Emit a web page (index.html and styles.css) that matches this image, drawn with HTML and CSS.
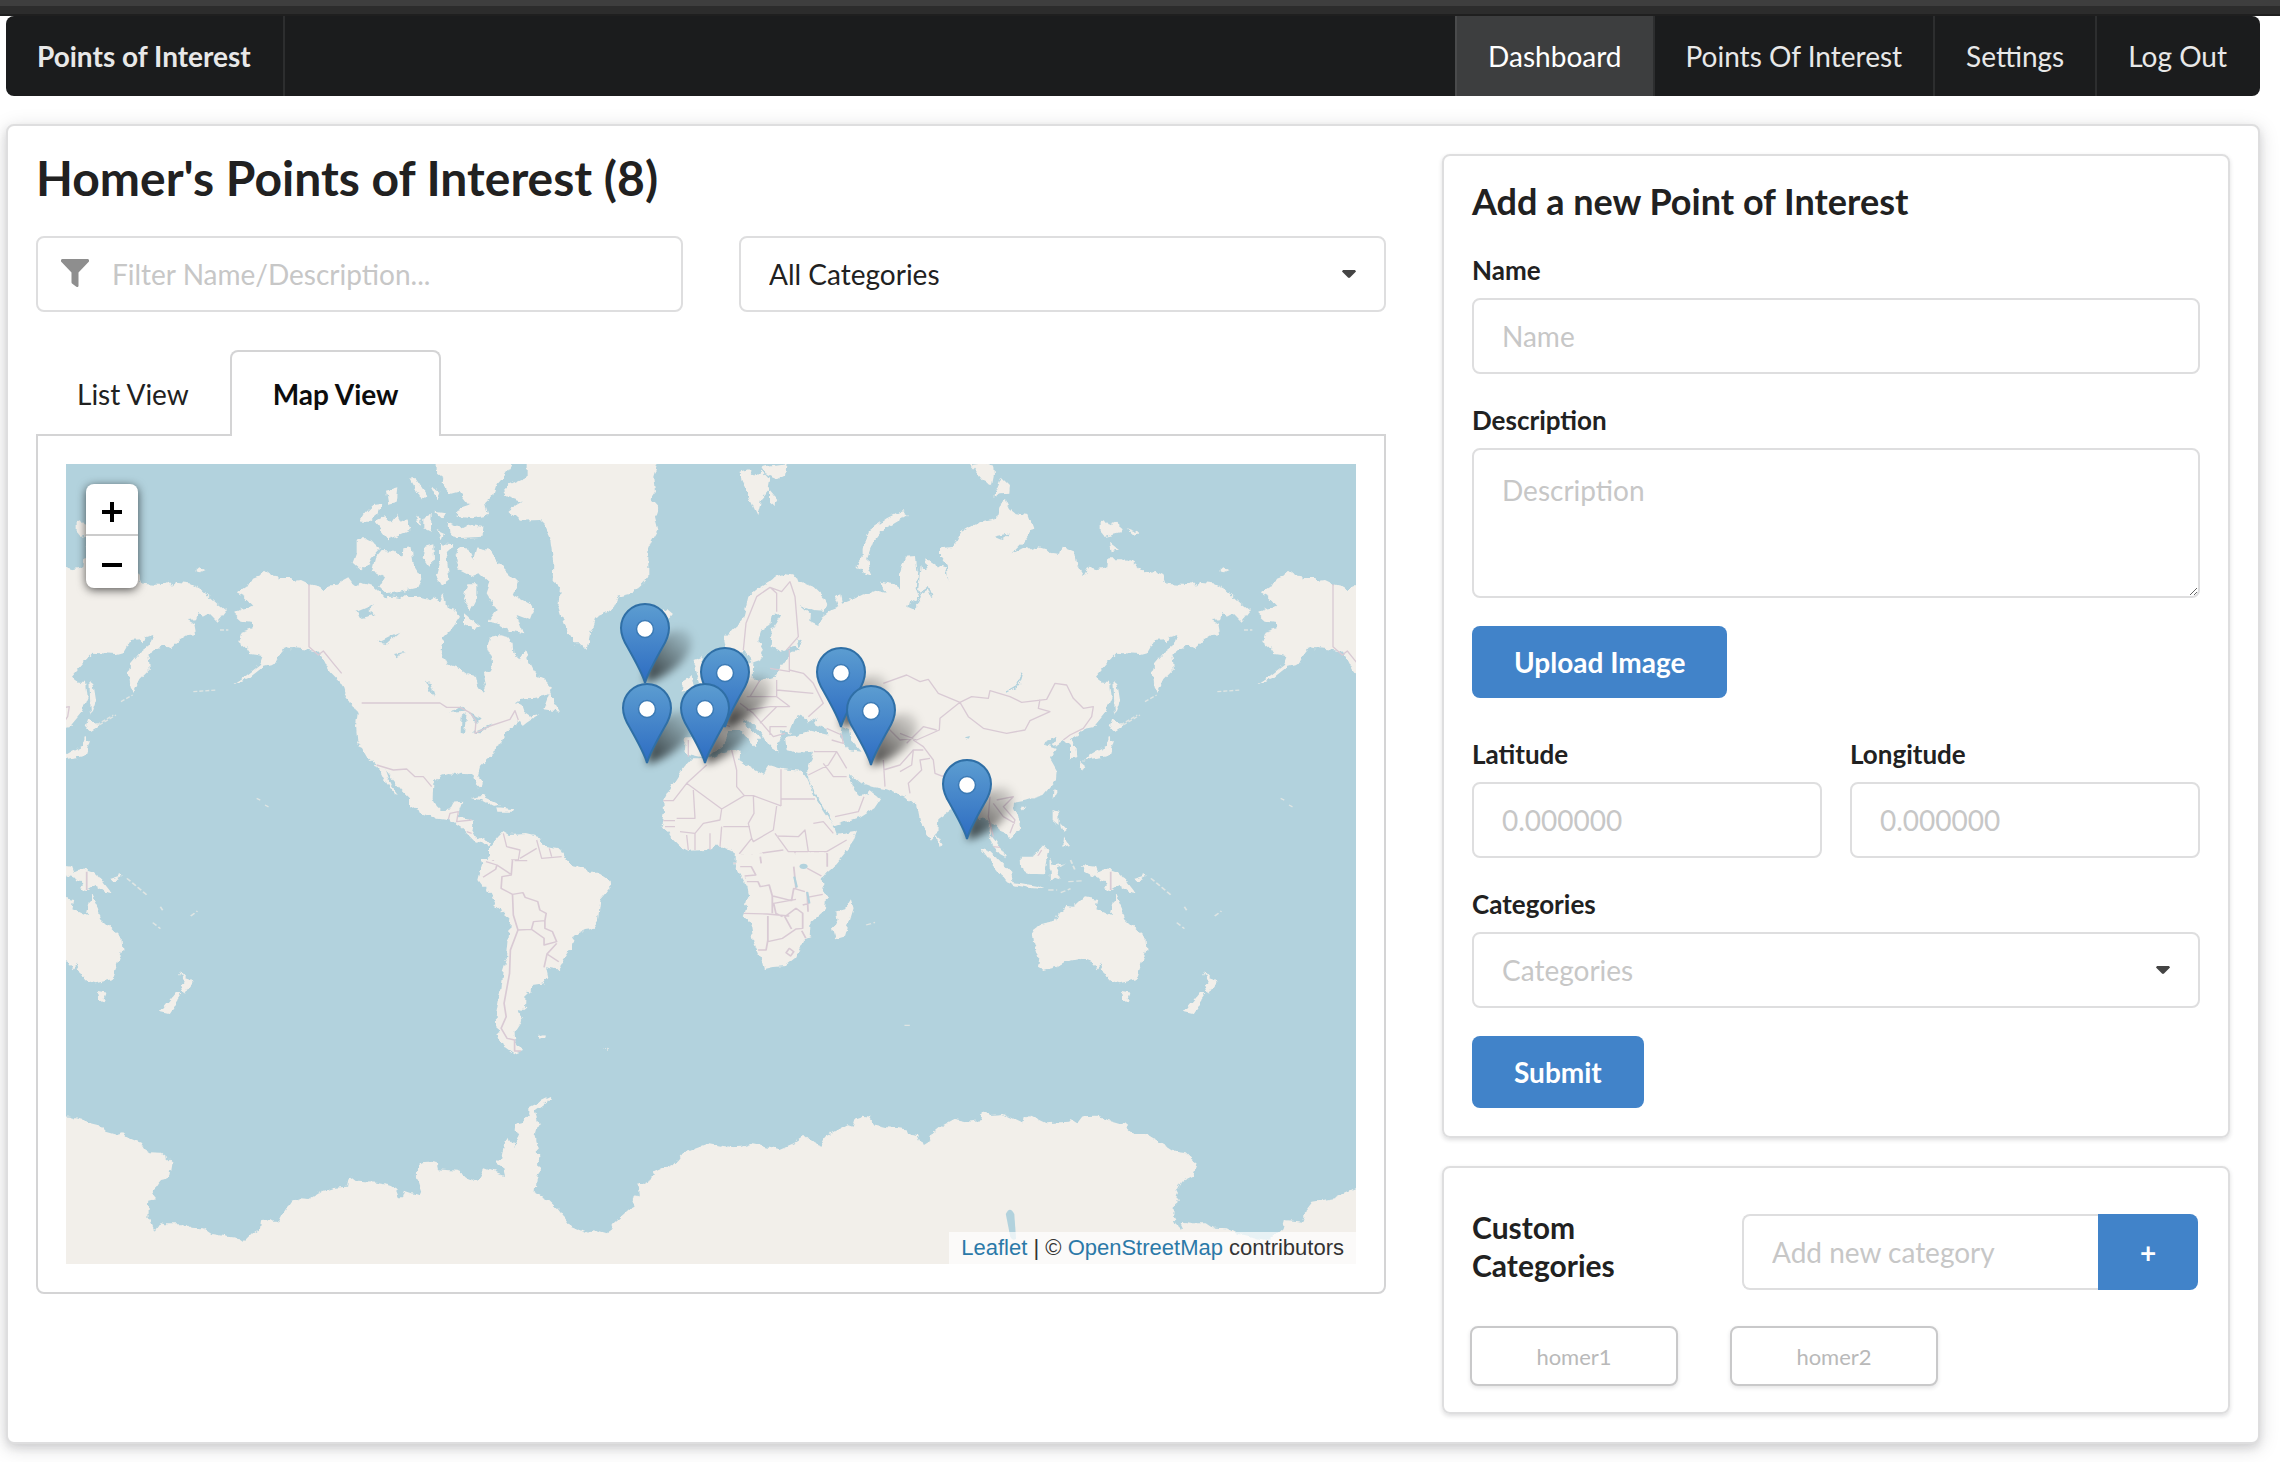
FILE: index.html
```html
<!DOCTYPE html>
<html lang="en">
<head>
<meta charset="utf-8">
<title>Points of Interest</title>
<link rel="stylesheet" href="styles.css">
</head>
<body>
<div class="window-edge"></div>
<div class="page">
  <nav class="menu">
    <a class="menu-item brand" href="#">Points of Interest</a>
    <div class="menu-right">
      <a class="menu-item active" href="#">Dashboard</a>
      <a class="menu-item" href="#">Points Of Interest</a>
      <a class="menu-item" href="#">Settings</a>
      <a class="menu-item" href="#">Log Out</a>
    </div>
  </nav>

  <main class="segment">
    <section class="main-column">
      <h1 class="title">Homer's Points of Interest (8)</h1>
      <div class="filters">
        <div class="icon-input">
          <svg class="filter-icon" viewBox="0 0 28 28" aria-hidden="true"><path d="M1 0H27Q29 1 27.500 3L17.500 13.500V27Q17 29 15 27.500L11 24.500Q10.500 24 10.500 23V13.500L.5 3Q-1 1 1 0Z"/></svg>
          <input class="field-control with-icon" type="text" placeholder="Filter Name/Description..." aria-label="Filter by name or description">
        </div>
        <div class="select-wrap">
          <select class="field-control" aria-label="Category filter"><option>All Categories</option></select>
          <svg class="caret" viewBox="0 0 14 8" aria-hidden="true"><path d="M1 0H13L14 1.500 8 7.500Q7 8.400 6 7.500L0 1.500Z"/></svg>
        </div>
      </div>

      <div class="tabs" role="tablist">
        <button class="tab" type="button" role="tab">List View</button>
        <button class="tab active" type="button" role="tab" aria-selected="true">Map View</button>
      </div>
      <div class="tab-panel">
        <div class="map">
          <svg class="map-tiles" viewBox="66 464 1290 800" preserveAspectRatio="xMidYMid slice" aria-hidden="true">
            <defs>
              <linearGradient id="pin-fill" x1="0" y1="0" x2="0" y2="1">
                <stop offset="0" stop-color="#5c9dd1"/><stop offset="1" stop-color="#2d6cc2"/>
              </linearGradient>
              <linearGradient id="shadow-fill" gradientUnits="userSpaceOnUse" x1="0" y1="0" x2="44" y2="-50">
                <stop offset="0" stop-opacity=".75"/><stop offset="1" stop-opacity=".08"/>
              </linearGradient>
              <filter id="soft" x="-50%" y="-50%" width="200%" height="200%"><feGaussianBlur stdDeviation="4"/></filter>
              <!-- Breaks up the straight runs of the coastlines -->
              <filter id="coast" x="-2%" y="-2%" width="104%" height="104%" color-interpolation-filters="sRGB">
                <feTurbulence type="fractalNoise" baseFrequency=".05" numOctaves="2" seed="4" result="noise"/>
                <feDisplacementMap in="SourceGraphic" in2="noise" scale="18" xChannelSelector="R" yChannelSelector="G"/>
                <feGaussianBlur stdDeviation="1.500"/>
              </filter>
              <g id="pin">
                <path d="M0 -1C-2 -9 -8 -20 -17 -36Q-24 -47 -24 -56A24 24 0 0 1 24 -56Q24 -47 17 -36C8 -20 2 -9 0 -1Z" fill="url(#pin-fill)" stroke="#2f6fa6" stroke-width="2"/>
                <circle cx="0" cy="-55" r="8.500" fill="#fff" stroke="#3b7ab5" stroke-width="1.500"/>
              </g>
              <path id="pin-shadow" d="M0 0L4 -34Q26 -58 42 -52Q54 -40 36 -20Q20 -5 0 0Z" filter="url(#soft)" fill="url(#shadow-fill)"/>
              <g id="world">
                <g transform="translate(60 450) scale(.33333)">
                  <g class="land coast">
                    <!-- North America -->
                    <path d="M615 362L628 372 650 376 662 384 690 384 705 392 720 390 747 403 770 408 790 420 810 406 830 404 845 394 862 385 872 398 885 408 900 398 925 404 945 412 960 425 975 442 1000 440 1020 444 1035 432 1050 442 1080 440 1110 448 1120 442 1140 452 1150 430 1160 470 1180 476 1200 500 1180 530 1150 560 1142 600 1160 640 1200 655 1225 672 1245 678 1250 700 1268 728 1278 705 1272 672 1290 664 1296 640 1292 616 1282 590 1290 560 1320 556 1345 562 1358 580 1360 612 1378 628 1395 600 1405 630 1420 660 1432 678 1450 685 1472 708 1470 728 1450 738 1420 744 1390 745 1368 760 1385 768 1392 788 1410 800 1435 795 1400 818 1388 828 1380 812 1350 835 1330 860 1322 880 1305 890 1303 912 1280 930 1260 950 1254 972 1265 1000 1262 1018 1250 1005 1243 980 1230 970 1200 968 1185 975 1165 972 1140 980 1120 1000 1118 1045 1130 1068 1145 1082 1170 1078 1180 1058 1207 1055 1198 1080 1195 1100 1212 1106 1238 1110 1235 1140 1250 1168 1275 1161 1290 1178 1284 1190 1265 1175 1248 1178 1225 1155 1200 1130 1165 1108 1120 1102 1090 1092 1060 1075 1050 1068 1050 1045 1025 1020 1000 990 975 958 990 1000 1015 1035 1005 1032 980 1000 965 970 950 945 920 920 905 895 892 870 888 830 893 790 880 768 858 740 850 715 835 690 815 670 800 650 785 620 770 605 735 598 700 595 675 592 660 610 650 640 632 645 610 650 570 682 515 706 560 676 600 645 610 618 570 612 560 596 535 575 545 545 578 535 575 515 545 512 520 490 548 476 580 470 550 440 530 430 560 410 575 385 600 375Z"/>
                    <!-- Arctic islands -->
                    <path d="M890 268L922 268 945 280 962 295 935 325 925 345 905 362 878 338 890 305ZM965 300L1005 302 1028 322 1030 295 1055 292 1060 340 1088 385 1075 412 1040 420 985 432 960 412 975 385 950 368 935 365 945 325ZM1095 290L1120 283 1122 325 1105 350 1085 320ZM1140 280L1180 283 1160 320 1168 388 1145 405 1128 375 1140 330ZM1185 320L1195 292 1225 296 1240 330 1250 292 1290 300 1325 350 1375 400 1360 435 1425 470 1410 510 1370 495 1390 550 1345 540 1310 520 1285 515 1310 480 1280 430 1290 400 1260 372 1240 380 1195 358ZM1222 400L1252 400 1252 440 1232 480 1212 450ZM1212 490L1262 532 1240 538 1212 525ZM900 215L915 190 940 165 965 162 955 190 925 215ZM945 215L975 200 995 220 1012 195 1022 215 1042 205 1050 240 985 268 968 245ZM1050 85L1068 85 1105 140 1082 145ZM978 122L1015 112 1010 155 985 162ZM1065 200L1082 205 1080 225ZM1090 200L1115 195 1112 245 1090 235ZM1112 110L1138 125 1130 145ZM1130 240L1152 250 1145 268ZM1125 185L1155 190 1145 205ZM1165 215L1205 235 1230 222 1270 228 1268 260 1185 265 1168 245ZM1130 30H1362L1325 88 1310 105 1300 135 1275 160 1285 195 1240 205 1190 200 1192 180 1228 168 1195 125 1170 132 1148 105 1150 80 1130 65ZM1290 430l18 6-8 20-14-10Z"/>
                    <!-- Greenland, Iceland, Svalbard -->
                    <path d="M1400 30L1795 30 1780 80 1785 125 1772 145 1795 170 1785 200 1795 240 1775 275 1765 300 1765 380 1750 400 1735 415 1710 432 1675 440 1662 470 1645 485 1610 500 1600 530 1590 550 1580 600 1562 580 1545 580 1525 545 1510 520 1495 470 1500 410 1478 390 1480 340 1470 260 1455 225 1440 210 1380 212 1345 180 1385 155 1340 140 1330 125 1350 103 1400 80ZM1812 475L1836 495 1822 515 1800 500ZM2042 65L2065 58 2085 80 2105 62 2130 90 2125 120 2105 145 2092 195 2078 165 2060 125 2045 95ZM2105 50L2180 40 2175 75 2150 88 2120 75ZM2130 120L2155 150 2145 168 2130 155ZM1470 725L1485 760 1500 785 1450 778Z"/>
                    <!-- Eurasia -->
                    <path d="M2065 440L2100 410 2130 392 2150 378 2170 372 2210 378 2215 392 2260 410 2290 440 2302 462 2292 482 2262 480 2222 465 2250 490 2248 512 2275 525 2285 500 2310 482 2338 472 2325 440 2340 430 2346 458 2380 445 2410 430 2430 432 2455 422 2480 428 2460 395 2500 402 2530 425 2550 440 2542 470 2560 478 2578 460 2520 440 2520 370 2535 320 2568 318 2572 370 2580 345 2600 360 2595 325 2625 345 2655 355 2665 395 2660 345 2640 320 2640 295 2680 290 2700 250 2740 225 2770 212 2810 205 2820 165 2838 153 2850 178 2865 190 2905 195 2920 235 2890 275 2855 312 2900 288 2915 300 2940 292 2960 298 2975 312 3000 315 3008 290 3045 305 3052 345 3070 375 3085 350 3110 358 3142 352 3145 325 3190 325 3215 335 3235 350 3250 370 3290 366 3310 375 3320 402 3380 405 3398 395 3412 412 3420 395 3460 400 3490 415 3520 440 3548 465 3570 482 3545 515 3520 490 3500 500 3490 482 3480 508 3455 510 3475 522 3480 550 3460 552 3430 570 3405 595 3385 585 3350 600 3338 622 3342 658 3310 690 3290 732 3282 700 3278 665 3285 640 3310 610 3340 588 3352 555 3330 562 3320 580 3308 568 3285 570 3265 605 3240 612 3170 608 3140 640 3105 680 3125 695 3150 695 3155 740 3135 790 3100 832 3070 838 3055 855 3030 868 3050 895 3052 922 3030 925 3030 888 3012 870 2990 885 2975 888 2990 860 2960 872 2955 885 2990 898 2970 925 2990 960 2988 990 2950 1035 2895 1052 2862 1058 2860 1078 2878 1110 2880 1140 2850 1165 2838 1150 2820 1142 2812 1125 2798 1122 2792 1155 2820 1190 2838 1222 2820 1212 2800 1188 2788 1155 2790 1120 2775 1102 2752 1108 2748 1080 2720 1060 2690 1070 2665 1085 2635 1108 2632 1150 2613 1172 2598 1150 2580 1110 2570 1058 2555 1060 2535 1040 2480 1018 2435 1010 2395 995 2370 972 2372 990 2395 1038 2425 1035 2428 1020 2460 1045 2440 1075 2400 1100 2320 1128 2300 1085 2270 1035 2245 990 2245 952 2262 905 2215 908 2180 900 2175 862 2210 856 2160 840 2165 870 2150 880 2152 905 2135 895 2118 872 2105 850 2070 815 2050 805 2060 830 2103 862 2095 870 2088 892 2075 880 2040 840 2010 840 2000 862 1985 890 1940 925 1885 912 1872 900 1875 862 1918 862 1930 840 1905 800 1945 785 1980 745 2020 715 2055 700 2062 645 2080 635 2078 685 2100 690 2140 680 2200 600 2080 640 2050 600 2030 615 1998 595 1992 565 2020 535 2048 510Z"/>
                    <path d="M2530 180L2540 198 2500 222 2475 235 2455 255 2440 275 2422 325 2425 350 2438 378 2408 368 2390 345 2408 320 2408 290 2430 240 2480 205ZM1900 630L1928 620 1925 660 1945 685 1968 730 1900 742 1920 700ZM1870 690L1895 675 1902 715 1865 728ZM2730 45L2770 40 2800 50 2802 75 2796 105 2770 92ZM2825 80L2850 105 2848 128 2822 130 2800 140ZM3122 218L3135 212 3145 225 3165 215 3188 235 3180 250 3135 260 3122 245ZM3200 235L3236 248 3225 258ZM3150 278L3175 298 3155 304ZM3475 365L3490 352 3508 362 3490 370Z"/>
                    <!-- Japan, South-East Asia -->
                    <path d="M3160 805L3190 830 3165 846 3150 835ZM3150 860L3162 872 3148 918 3100 925 3065 932 3110 905 3140 890ZM3060 932L3075 945 3064 962ZM3160 690L3172 700 3180 750 3165 795 3162 740ZM2630 1155L2648 1185 2635 1190ZM2980 1020L2990 1025 2978 1050ZM2880 1070L2896 1070 2885 1083ZM2978 1080L2995 1085 2996 1125 2978 1110ZM3012 1160L3030 1185 3010 1190ZM3000 1120L3020 1140 3008 1150ZM2762 1195L2790 1205 2850 1265 2858 1300 2835 1290ZM2880 1232L2915 1225 2950 1185 2965 1200 2952 1270 2900 1268ZM2970 1248L3018 1240 2988 1252 3002 1290 2980 1270ZM3070 1245L3110 1270 3140 1255 3190 1280 3200 1300 3130 1295 3075 1265ZM1230 1045L1265 1038 1320 1064 1300 1068 1265 1050ZM1312 1072L1365 1078 1355 1085 1315 1085Z"/>
                    <!-- Africa and the north of South America -->
                    <path d="M1895 925L1950 925 1985 912 2020 900 2042 902 2038 930 2070 950 2110 972 2128 945 2170 958 2225 962 2240 985 2270 1050 2320 1125 2330 1152 2388 1142 2370 1190 2330 1240 2290 1275 2270 1310H2060L2030 1255 2035 1215 2015 1202 1990 1190 1965 1190 1940 1200 1885 1202 1860 1190 1830 1160 1805 1120 1812 1085 1810 1052 1830 1015 1865 960ZM1290 1190L1330 1143 1350 1155 1400 1152 1440 1162 1450 1190 1500 1198 1520 1232 1535 1248 1580 1260 1600 1290V1310H1270L1255 1290 1268 1240 1290 1220Z"/>
                  </g>
                  <g class="specks">
                    <path d="M590 1045L605 1052M615 1065L628 1072M480 540L505 540M400 725L470 720M110 825L160 795M3255 755L3290 735M3190 825L3240 795"/>
                  </g>
                  <g class="water coast">
                    <path d="M2135 495L2165 492 2150 520 2135 540 2132 590 2165 605 2200 588 2220 600 2160 615 2150 640 2145 680 2100 690 2080 682 2100 630 2112 600 2095 570 2105 540 2130 525ZM2190 845L2210 795 2235 800 2242 818 2270 800 2262 820 2300 838 2302 854 2250 842 2205 858ZM2345 830L2370 840 2375 870 2405 905 2365 900 2340 860ZM890 485L945 462 925 480 945 495 900 505ZM955 575L985 560 1018 545 980 580ZM1002 615L1035 608 1008 622ZM1098 695L1112 700 1125 740 1110 720ZM1168 788L1200 768 1222 785ZM1205 800L1220 790 1212 848 1202 845ZM1228 785L1265 805 1248 822ZM1238 848L1300 822 1262 850ZM2715 862L2730 858 2725 870ZM2802 260L2850 250 2825 270ZM2210 570L2225 580 2215 592Z"/>
                    <path class="stroke" d="M2888 668L2882 690 2865 712 2840 726M2580 340L2572 420 2580 440 2565 470M2580 430L2605 415 2615 440"/>
                  </g>
                  <path class="border" d="M747 403V590L775 615 790 603 820 640 845 670M905 759H1140L1160 772 1200 772 1230 788 1248 812 1245 850 1290 828 1350 808 1365 782 1375 810M950 945L1000 960 1040 957 1065 980 1090 980 1115 1010M1165 1108L1170 1090 1195 1085 1190 1115 1235 1110M1220 1145L1235 1150M1330 1150L1340 1190 1380 1200 1375 1230 1355 1230V1280L1320 1265 1300 1232 1270 1252M1355 1275L1320 1280M1430 1170L1445 1225 1505 1220M1468 1195L1475 1220M1380 1225L1430 1195"/>
                  <path class="border" d="M2163 958V1068M2163 1047H2265M2163 1068L2080 1037 2053 1037 1985 1077 1880 1000 1940 945M2030 960V1010L2053 1037M1900 1020L1905 1105H1850M1810 1052H1840L1880 1000M1985 1077L1980 1110 1930 1120 1905 1150 1860 1145M2080 1037L2082 1090 2065 1120 2075 1165 2035 1215M2150 1068L2140 1140 2080 1175 2075 1165M1990 1130L2070 1130M1980 1190L1985 1130M2145 1150L2185 1205 2245 1205 2235 1140 2215 1160 2150 1158M2245 1205H2300L2360 1170M2260 1120L2290 1115 2320 1150M1950 1150V1200M1905 1150V1200M1880 1155L1885 1200M2300 1210V1265M2100 1210L2090 1260 2055 1285M2100 1210L2170 1200M2205 1205V1280M1810 1112H1845M1815 1130H1845M2015 900L2030 960M2040 1215H2080M2020 1240H2050"/>
                  <path class="border" d="M2262 905H2330L2360 955M2245 975L2305 945 2330 905M2290 940L2320 980 2360 980M2470 930L2475 1010M2470 960L2520 945 2560 900M2325 1100L2395 1085 2412 1040M2050 600L2058 520 2090 440 2130 412 2150 430V485M2130 412L2165 425 2190 395 2205 440 2215 560 2180 600M2188 600V660L2230 670 2260 700 2290 760 2245 800M2130 655L2190 665M2150 690V740L2190 770M2060 740L2150 740M2060 780L2130 770 2190 770M2040 760L2080 790 2140 860 2175 850M2100 820L2150 770M2130 855V830H2180M2150 720L2260 730M2100 690L2070 740M2300 835L2345 855 2350 880 2315 870M1885 870V920M1985 820L2010 830"/>
                  <path class="border" d="M2470 700L2540 675 2580 695 2605 688 2635 730 2700 757 2735 740 2785 745 2790 722 2850 740 2885 757 2960 748 2985 700 3020 705 3040 745 3070 775 3100 770 3095 800 3070 835 3030 855 3010 870M2700 757L2725 800 2770 835 2840 850 2895 840 2910 812 2970 785 2935 775 2940 748M2700 757L2640 805 2638 840 2570 870 2520 850M2540 880L2590 830 2630 840M2560 870L2590 890 2620 930 2625 970 2650 980M2610 925L2580 930 2585 960 2545 1000 2550 1030M2520 965L2555 945 2560 900 2590 900M2480 830L2520 870 2560 865M2790 1040L2785 1100 2800 1160M2810 1050L2860 1040 2830 1070 2865 1110 2850 1150M2800 1060L2830 1100 2865 1120M2650 975L2660 1050M2880 1235L2925 1232 2945 1200M2800 1190L2820 1192"/>
                </g>
                <!-- Rest of South America -->
                <g transform="translate(60 860) scale(.42092 .33333)">
                  <path class="land coast" d="M1000 0H1205L1215 18 1240 25 1250 38 1280 38 1306 60 1308 85 1284 120 1278 180 1262 210 1245 213 1222 228 1215 265 1182 328 1155 322 1160 350 1150 370 1122 375 1120 398 1106 395 1105 440 1090 455 1098 480 1080 515 1082 545 1100 573 1080 583 1050 555 1038 515 1035 470 1045 400 1052 330 1062 290 1070 175 1035 140 1020 95 998 55 1003 10ZM1135 528L1150 523 1152 532 1138 536ZM1290 562l8 4 2 8Z"/>
                  <path class="border" d="M1075 103L1077 165 1088 210 1070 270 1068 340 1055 430 1060 470 1048 505 1062 535 1080 540V573L1095 573M1012 5L1038 15 1035 28 1005 52M1038 15L1070 42M1075 0L1072 45 1050 50 1048 85 1075 103 1100 98 1105 112 1135 125 1140 150 1155 160 1152 182 1125 185 1120 208 1088 210M1152 182V205L1170 215 1180 245 1150 255V235L1120 208M1180 250L1157 282 1185 305M1157 282L1150 322M1080 2H1110"/>
                </g>
                <!-- Southern Africa, Australia and Oceania -->
                <g transform="translate(700 860) scale(.44643 .33333)">
                  <path class="land coast" d="M80 -20V15L100 50 108 110 98 160 115 200 120 245 138 300 143 327 160 322 190 318 215 292 235 235 248 228 250 185 280 150 282 115 272 60 300 10V-20ZM338 118L344 145 325 230 305 238 298 205 308 180 305 155 325 148ZM745 210L760 195 797 185 803 160 820 138 838 140 860 112 892 120 888 145 920 165 930 103 945 145 952 178 998 235 1000 270 990 310 978 358 940 370 915 360 905 335 898 312 888 328 880 305 860 295 820 305 800 320 770 330 757 320 760 295 748 245ZM945 393L967 398 958 427 949 420ZM1127 330L1143 355 1159 362 1140 402 1133 375 1137 365ZM1120 395L1134 402 1104 462 1084 456ZM855 15L885 20 890 38 905 25 935 38 955 60 978 100 960 95 940 75 922 90 905 82 912 65 880 45ZM972 60L992 52 995 40 998 52 978 66ZM695 65L720 70 755 78 775 88 740 84 700 74ZM650 -5L668 0 695 35 698 62 675 38ZM718 -10H775L765 35 745 45 720 32ZM785 -10L795 30 805 55 795 50 786 60Z"/>
                  <path class="specks" d="M780 90H800M808 98L830 86M1010 55L1055 105M1068 188L1085 206M1085 140L1092 155M1153 168L1168 153M372 195L392 187M458 496H470M825 65L860 62M830 0L840 30"/>
                  <path class="border" d="M105 65H130L135 80 155 75 162 108V160M98 160L150 162 200 168M152 168V240L148 270 130 270M152 245L185 235 215 207 230 205V160L215 145 190 170 205 207M163 108L205 122 210 85 235 95M185 170L170 160 165 130 215 118M240 95L242 155M230 135L245 130M240 112L275 103M237 235L228 212M200 265L210 275 203 288 193 278ZM210 20L215 85M240 25L272 48M285 -20V20M920 35V90M90 20H115L125 45 100 48M135 -10L137 10"/>
                  <ellipse class="water" cx="232" cy="19" rx="9" ry="8"/>
                  <path class="water stroke" d="M211 50L217 82M240 96L245 130"/>
                </g>
              </g>
            </defs>
            <use href="#world" x="-1024"/>
            <use href="#world"/>
            <use href="#world" x="1024"/>
            <!-- Antarctica -->
            <path class="land coast" transform="translate(60 860) scale(.42092 .33333)" d="M-20 768L24 770 60 783 92 793 108 815 135 825 150 820 165 835 192 848 200 865 215 877 240 878 265 905 260 945 248 958 240 960 228 978 218 1005 226 1018 212 1022 210 1070 225 1112 240 1085 250 1090 295 1090 308 1103 340 1105 360 1122 400 1130 430 1135 440 1143 458 1120 475 1108 478 1080 500 1078 520 1085 530 1060 548 1025 570 1015 595 1017 625 993 650 984 682 980 687 948 705 965 750 968 780 975 795 980 805 1012 815 1012 820 993 855 1007 858 990 848 950 848 925 860 910 878 908 895 912 898 928 945 932 970 955 992 965 1010 925 1055 945 1050 920 1036 908 1048 895 1055 850 1065 832 1080 860 1090 830 1080 808 1085 790 1100 785 1115 760 1115 740 1165 710 1160 725 1128 755 1137 790 1130 820 1134 860 1140 930 1132 960 1130 1000 1160 1020 1185 1050 1215 1100 1250 1118 1265 1108 1300 1120 1315 1090 1350 1050 1365 1040 1360 1020 1375 1005 1372 970 1395 975 1410 938 1460 910 1480 880 1525 870 1540 850 1600 865V1245H-20Z"/>
            <path class="land coast" transform="translate(700 860) scale(.44643 .33333)" d="M-30 875L18 852 30 863 95 860 118 850 180 867 210 850 235 828 255 850 270 857 280 830 330 795 342 800 348 775 365 767 380 770 390 793 420 802 465 808 470 825 488 828 497 855 515 840 522 820 545 795 570 777 600 785 630 780 635 750 650 765 680 762 720 787 740 767 775 790 825 785 830 777 845 790 855 772 890 770 950 793 975 822 1000 822 1045 858 1065 875 1090 880 1110 905 1103 950 1080 965 1065 1005 1073 1018 1062 1030 1060 1070 1075 1110 1085 1085 1105 1090 1135 1090 1150 1103 1180 1105 1200 1120 1275 1142 1305 1105 1310 1080 1350 1085 1358 1050 1372 1025 1420 1015 1469 985 1500 975V1245H-30Z"/>
            <path class="water" transform="translate(700 860) scale(.44643 .33333)" d="M685 1062Q694 1036 704 1062L708 1136Q700 1144 695 1130Z"/>
            <use href="#pin-shadow" x="645" y="683"/><use href="#pin-shadow" x="725" y="728"/><use href="#pin-shadow" x="841" y="728"/><use href="#pin-shadow" x="647" y="764"/><use href="#pin-shadow" x="705" y="764"/><use href="#pin-shadow" x="871" y="766"/><use href="#pin-shadow" x="967" y="840"/>
            <use href="#pin" x="645" y="684"/><use href="#pin" x="725" y="728"/><use href="#pin" x="841" y="728"/><use href="#pin" x="647" y="764"/><use href="#pin" x="705" y="764"/><use href="#pin" x="871" y="766"/><use href="#pin" x="967" y="840"/>
          </svg>
          <div class="zoom">
            <button class="zoom-button" type="button" aria-label="Zoom in"><svg viewBox="0 0 20 20" aria-hidden="true"><path d="M0 10H20M10 0V20"/></svg></button>
            <button class="zoom-button" type="button" aria-label="Zoom out"><svg viewBox="0 0 20 20" aria-hidden="true"><path d="M0 10H20"/></svg></button>
          </div>
          <div class="attribution"><a href="#">Leaflet</a> | © <a href="#">OpenStreetMap</a> contributors</div>
        </div>
      </div>
    </section>

    <aside class="side-column">
      <form class="card">
        <h2 class="card-title">Add a new Point of Interest</h2>
        <div class="field">
          <label for="name">Name</label>
          <input class="field-control" id="name" type="text" placeholder="Name">
        </div>
        <div class="field">
          <label for="description">Description</label>
          <textarea class="field-control area" id="description" placeholder="Description"></textarea>
        </div>
        <button class="button upload" type="button">Upload Image</button>
        <div class="field-pair">
          <div class="field">
            <label for="latitude">Latitude</label>
            <input class="field-control" id="latitude" type="text" placeholder="0.000000">
          </div>
          <div class="field">
            <label for="longitude">Longitude</label>
            <input class="field-control" id="longitude" type="text" placeholder="0.000000">
          </div>
        </div>
        <div class="field">
          <label for="categories">Categories</label>
          <div class="select-wrap">
            <select class="field-control empty" id="categories"><option>Categories</option></select>
            <svg class="caret" viewBox="0 0 14 8" aria-hidden="true"><path d="M1 0H13L14 1.500 8 7.500Q7 8.400 6 7.500L0 1.500Z"/></svg>
          </div>
        </div>
        <button class="button" type="submit">Submit</button>
      </form>

      <section class="card custom">
        <div class="custom-head">
          <h3 class="custom-title">Custom Categories</h3>
          <form class="action-input">
            <input class="field-control" type="text" placeholder="Add new category" aria-label="New category">
            <button class="button add" type="submit">+</button>
          </form>
        </div>
        <div class="chips">
          <button class="chip" type="button">homer1</button>
          <button class="chip" type="button">homer2</button>
        </div>
      </section>
    </aside>
  </main>
</div>
</body>
</html>
```

FILE: styles.css
```css
* { box-sizing: border-box; }

body {
  margin: 0;
  background: #fff;
  color: #212121;
  font-family: Lato, "Open Sans", sans-serif;
  font-size: 28px;
  line-height: 36px;
}

button, input, select, textarea { font: inherit; color: inherit; }
button { cursor: pointer; }
h1, h2, h3 { margin: 0; font-weight: 700; }

.window-edge {
  height: 16px;
  background: #2c2c2c;
  border-top: 6px solid #3e3e3e;
  border-bottom: 2px solid #1f1f1f;
}

.page { padding: 0 20px 18px 6px; }

/* Top menu */
.menu {
  display: flex;
  justify-content: space-between;
  height: 80px;
  margin-bottom: 28px;
  background: #1b1c1d;
  border-radius: 8px;
  overflow: hidden;
}
.menu-right { display: flex; padding-right: 2px; }
.menu-item {
  display: flex;
  align-items: center;
  padding: 0 31px;
  color: #e8e8e8;
  text-decoration: none;
  border-left: 2px solid #2d2e2f;
}
.menu-item.brand {
  padding: 0 32px 0 31px;
  font-weight: 700;
  border-left: 0;
  border-right: 2px solid #2d2e2f;
}
.menu-item.active { background: #3d3e3f; border-left-color: #4a4b4c; color: #fff; }

/* Page body */
.segment {
  display: grid;
  grid-template-columns: minmax(0, 1350fr) minmax(0, 788fr);
  gap: 56px;
  padding: 28px;
  border: 2px solid #dededf;
  border-radius: 8px;
  background: #fff;
  box-shadow: 0 4px 8px rgba(34, 36, 38, .12), 0 4px 20px rgba(34, 36, 38, .15);
}
.title { margin: -7px 0 27px; font-size: 48px; line-height: 62px; }
.filters { display: grid; grid-template-columns: 1fr 1fr; gap: 56px; }

.field-control {
  display: block;
  width: 100%;
  height: 76px;
  padding: 0 28px;
  border: 2px solid #dededf;
  border-radius: 8px;
  background: #fff;
  outline: 0;
}
.field-control::placeholder { color: #c7c7c7; opacity: 1; }
select.field-control { appearance: none; color: #212121; }
select.field-control.empty { color: #c7c7c7; }
.field-control.with-icon { padding-left: 74px; }
.field-control.area { height: 150px; padding: 22px 28px; resize: vertical; }

.icon-input, .select-wrap { position: relative; }
.filter-icon { position: absolute; left: 25px; top: 23px; width: 28px; height: 28px; fill: #8e8e8e; }
.caret { position: absolute; right: 30px; top: 34px; width: 14px; height: 8px; fill: #444; pointer-events: none; }

/* Tabs */
.tabs { display: flex; margin-top: 38px; }
.tab {
  height: 86px;
  margin-bottom: -2px;
  padding: 0 39px;
  border: 2px solid transparent;
  border-bottom: 0;
  border-radius: 8px 8px 0 0;
  background: transparent;
}
.tab.active {
  position: relative;
  padding: 0 41px;
  border-color: #d4d4d5;
  background: #fff;
  color: #0d0d0d;
  font-weight: 700;
}
.tab-panel { padding: 28px; border: 2px solid #d4d4d5; border-radius: 0 0 8px 8px; }

/* Map */
.map { position: relative; height: 800px; overflow: hidden; background: #b2d2dd; }
.map-tiles { display: block; width: 100%; height: 100%; }
.land { fill: #f2efea; }
.coast { filter: url(#coast); }
.water { fill: #b2d2dd; }
.stroke { fill: none; stroke: #b2d2dd; stroke-width: 5; }
.specks { fill: none; stroke: #dfe5e3; stroke-width: 4; stroke-dasharray: 12 6; }
.border { fill: none; stroke: #d9cad4; stroke-width: 4; stroke-linejoin: round; }

.zoom {
  position: absolute;
  left: 20px;
  top: 20px;
  width: 52px;
  border-radius: 8px;
  background: #fff;
  box-shadow: 0 2px 10px rgba(0, 0, 0, .65);
}
.zoom-button {
  display: flex;
  align-items: center;
  justify-content: center;
  width: 100%;
  height: 52px;
  padding: 6px 0 0;
  border: 0;
  background: transparent;
}
.zoom-button:first-child { border-bottom: 2px solid #ccc; }
.zoom-button svg { width: 20px; height: 20px; fill: none; stroke: #000; stroke-width: 4; }

.attribution {
  position: absolute;
  right: 0;
  bottom: 0;
  height: 32px;
  padding: 0 12px;
  background: rgba(255, 255, 255, .7);
  color: #333;
  font-family: "Liberation Sans", Arial, sans-serif;
  font-size: 22px;
  line-height: 32px;
}
.attribution a { color: #2b79a8; text-decoration: none; }

/* Side cards */
.side-column { display: flex; flex-direction: column; gap: 28px; }
.card {
  padding: 22px 28px 28px;
  border: 2px solid #dededf;
  border-radius: 8px;
  box-shadow: 0 2px 4px rgba(34, 36, 38, .15);
}
.card-title { font-size: 36px; line-height: 46px; }
.field { margin: 30px 0 28px; }
.field label {
  display: block;
  margin-bottom: 12px;
  font-size: 26px;
  font-weight: 700;
  line-height: 32px;
}
.field-pair { display: grid; grid-template-columns: 1fr 1fr; gap: 28px; }
.field-pair .field { margin-bottom: 0; }

.button {
  display: block;
  height: 72px;
  padding: 0 42px;
  border: 0;
  border-radius: 8px;
  background: #4183c9;
  color: #fff;
  font-weight: 700;
}
.button.upload { margin-bottom: 40px; }
.upload + .field-pair .field { margin-top: 0; }

.card.custom { padding: 40px 28px 26px; }
.custom-head { display: grid; grid-template-columns: 214fr 456fr; gap: 56px; padding-right: 2px; }
.custom-title { font-size: 30px; line-height: 38px; }
.action-input { display: flex; padding-top: 6px; }
.action-input .field-control { flex: 1; min-width: 0; border-right: 0; border-radius: 8px 0 0 8px; }
.button.add { width: 100px; height: 76px; padding: 0; border-radius: 0 8px 8px 0; }
.chips { display: flex; gap: 52px; margin: 36px -2px 0; }
.chip {
  width: 208px;
  height: 60px;
  padding: 2px 0 0;
  border: 2px solid #c9c9ca;
  border-radius: 8px;
  background: #fff;
  box-shadow: 0 2px 4px rgba(34, 36, 38, .12);
  color: #b9b9b9;
  font-size: 22px;
}
```
